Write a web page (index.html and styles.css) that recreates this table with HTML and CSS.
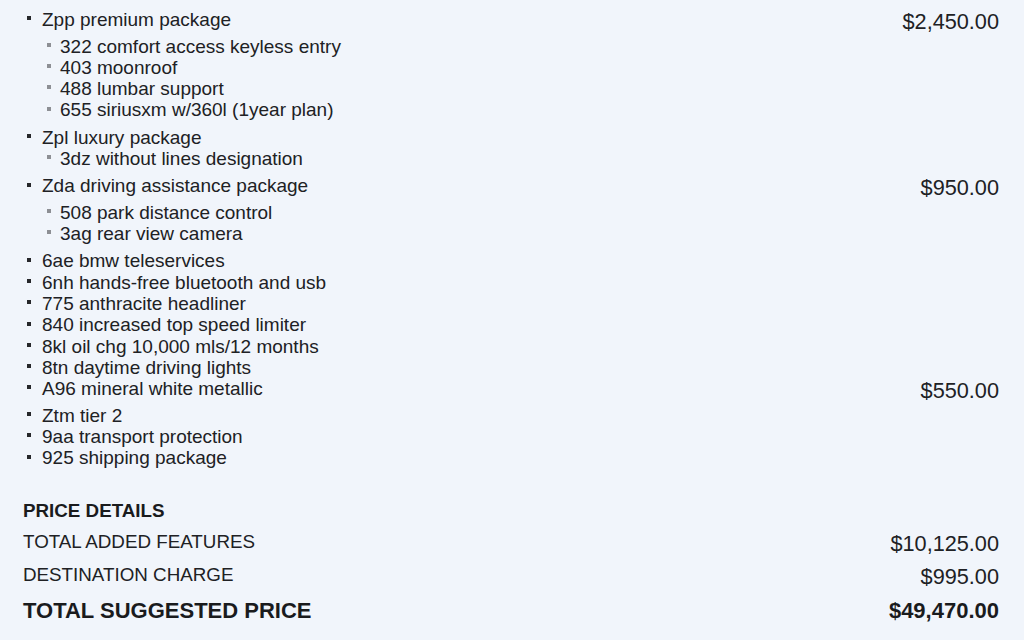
FILE: index.html
```html
<!DOCTYPE html>
<html lang="en">
<head>
<meta charset="utf-8">
<title>Options</title>
<link rel="stylesheet" href="styles.css">
</head>
<body>
<div class="page">
  <ul class="options">
    <li class="opt">
      <div class="opt-row">
        <span class="name"><span class="dot"></span>Zpp premium package</span>
        <span class="price">$2,450.00</span>
      </div>
      <ul class="subs">
        <li><span class="dot sub"></span>322 comfort access keyless entry</li>
        <li><span class="dot sub"></span>403 moonroof</li>
        <li><span class="dot sub"></span>488 lumbar support</li>
        <li><span class="dot sub"></span>655 siriusxm w/360l (1year plan)</li>
      </ul>
    </li>
    <li class="opt">
      <div class="opt-row">
        <span class="name"><span class="dot"></span>Zpl luxury package</span>
      </div>
      <ul class="subs">
        <li><span class="dot sub"></span>3dz without lines designation</li>
      </ul>
    </li>
    <li class="opt">
      <div class="opt-row">
        <span class="name"><span class="dot"></span>Zda driving assistance package</span>
        <span class="price">$950.00</span>
      </div>
      <ul class="subs">
        <li><span class="dot sub"></span>508 park distance control</li>
        <li><span class="dot sub"></span>3ag rear view camera</li>
      </ul>
    </li>
    <li class="opt"><div class="opt-row"><span class="name"><span class="dot"></span>6ae bmw teleservices</span></div></li>
    <li class="opt"><div class="opt-row"><span class="name"><span class="dot"></span>6nh hands-free bluetooth and usb</span></div></li>
    <li class="opt"><div class="opt-row"><span class="name"><span class="dot"></span>775 anthracite headliner</span></div></li>
    <li class="opt"><div class="opt-row"><span class="name"><span class="dot"></span>840 increased top speed limiter</span></div></li>
    <li class="opt"><div class="opt-row"><span class="name"><span class="dot"></span>8kl oil chg 10,000 mls/12 months</span></div></li>
    <li class="opt"><div class="opt-row"><span class="name"><span class="dot"></span>8tn daytime driving lights</span></div></li>
    <li class="opt">
      <div class="opt-row">
        <span class="name"><span class="dot"></span>A96 mineral white metallic</span>
        <span class="price">$550.00</span>
      </div>
    </li>
    <li class="opt"><div class="opt-row"><span class="name"><span class="dot"></span>Ztm tier 2</span></div></li>
    <li class="opt"><div class="opt-row"><span class="name"><span class="dot"></span>9aa transport protection</span></div></li>
    <li class="opt"><div class="opt-row"><span class="name"><span class="dot"></span>925 shipping package</span></div></li>
  </ul>

  <section class="details">
    <h2 class="details-title">PRICE DETAILS</h2>
    <div class="drow first">
      <span class="dlabel">TOTAL ADDED FEATURES</span>
      <span class="dprice">$10,125.00</span>
    </div>
    <div class="drow">
      <span class="dlabel">DESTINATION CHARGE</span>
      <span class="dprice">$995.00</span>
    </div>
    <div class="drow total">
      <span class="dlabel">TOTAL SUGGESTED PRICE</span>
      <span class="dprice">$49,470.00</span>
    </div>
  </section>
</div>
</body>
</html>
```
FILE: styles.css
```css
html, body {
  margin: 0;
  padding: 0;
  background: #f1f5fb;
}
body {
  font-family: "Liberation Sans", Arial, sans-serif;
  color: #202124;
  width: 1024px;
  height: 640px;
  overflow: hidden;
}
.page {
  padding: 9px 25px 0 23px;
}
.options {
  list-style: none;
  margin: 0;
  padding: 0 0 0 4px;
  font-size: 19px;
  line-height: 21.3px;
}
.opt-row {
  display: flex;
  justify-content: space-between;
  align-items: flex-start;
}
.name {
  white-space: nowrap;
}
.dot {
  display: inline-block;
  width: 4px;
  height: 4px;
  background: #26272a;
  margin-right: 11px;
  vertical-align: 0.3em;
}
.dot.sub {
  background: #8d8f94;
  margin-right: 9px;
}
.subs {
  list-style: none;
  margin: 0 0 6px 0;
  padding: 0 0 0 20px;
}
.price {
  font-size: 21.7px;
  line-height: 26.5px;
}
.details {
  margin-top: 31px;
}
.details-title {
  margin: 0;
  font-size: 18.8px;
  font-weight: bold;
  line-height: 22px;
  color: #1a1b1d;
}
.drow {
  display: flex;
  justify-content: space-between;
  align-items: flex-start;
  margin-top: 5px;
}
.drow.first {
  margin-top: 8px;
}
.dlabel {
  font-size: 18.8px;
  line-height: 24px;
}
.dprice {
  font-size: 21.7px;
  line-height: 28px;
}
.drow.total {
  margin-top: 7px;
  font-weight: bold;
  color: #1a1b1d;
}
.drow.total .dlabel,
.drow.total .dprice {
  font-size: 22px;
  line-height: 25px;
}
```
